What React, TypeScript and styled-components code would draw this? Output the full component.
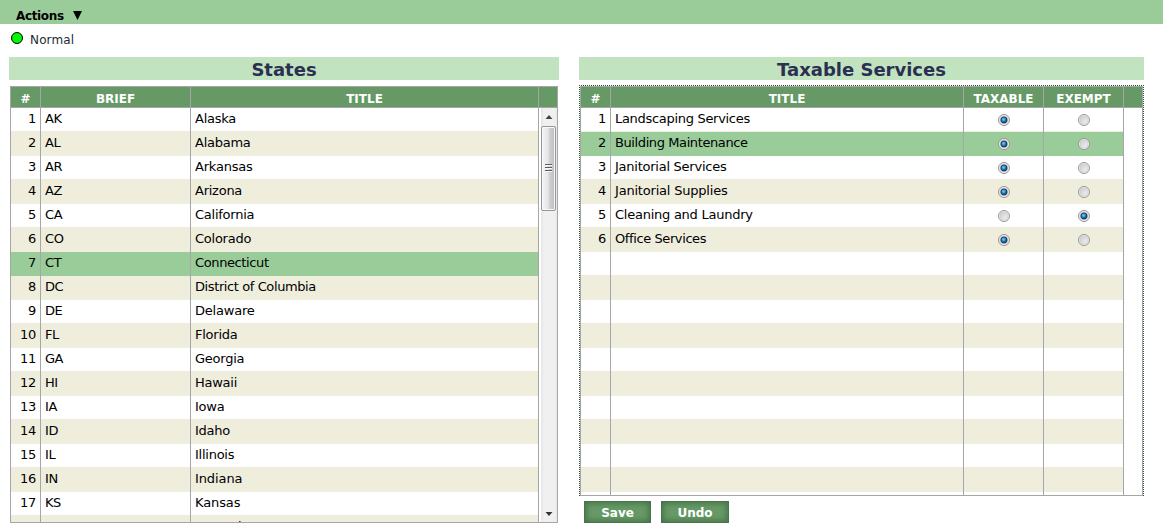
import React, { useState } from "react";
import styled, { createGlobalStyle, css } from "styled-components";

const line = "#a6a6a6";
const header = "#669966";
const leaf = "#99cc99";
const cream = "#efeedd";

const GlobalStyle = createGlobalStyle`
  * { box-sizing: border-box; }
  body {
    margin: 0;
    background: #fff;
    color: #000;
    font: 13px/16px "DejaVu Sans", Verdana, sans-serif;
    overflow: hidden;
  }
`;

const Page = styled.div`
  width: 1163px;
  height: 531px;
  overflow: hidden;
`;

const MenuBar = styled.nav`
  height: 24px;
  padding: 8px 0 0 16px;
  display: flex;
  gap: 9px;
  background: ${leaf};
  font-size: 12px;
  font-weight: bold;
  letter-spacing: -0.35px;
`;

const Caret = styled.svg`
  margin-top: 3px;
`;

const Status = styled.div`
  height: 33px;
  padding: 8px 0 0 11px;
  display: flex;
  gap: 7px;
  color: #1d2b33;
  font-size: 12px;
  line-height: 16px;
  letter-spacing: 0.15px;
`;

const Lamp = styled.span`
  width: 12px;
  height: 12px;
  border: 1px solid #000;
  border-radius: 50%;
  background: #00f800;
`;

const Columns = styled.main`
  display: flex;
  gap: 20px;
  padding-left: 9px;
`;

const Panel = styled.section<{ $width: number }>`
  width: ${(p) => p.$width}px;
`;

const Heading = styled.h2`
  height: 23px;
  margin: 0;
  background: #c2e3c0;
  color: #2b2f51;
  font-size: 18px;
  line-height: 25px;
  text-align: center;
`;

const Grid = styled.div<{ $height: number; $width: number }>`
  width: ${(p) => p.$width}px;
  height: ${(p) => p.$height}px;
  border: 1px solid ${line};
  display: flex;
  flex-direction: column;
`;

const GridSlot = styled.div<{ $focused?: boolean }>`
  padding: 6px 0 0 1px;
  ${(p) =>
    p.$focused &&
    css`
      margin-top: 5px;
      padding: 1px 1px 0;
      background:
        repeating-linear-gradient(90deg, #2d532d 0 1px, #fff 1px 2px) top / 100% 1px no-repeat,
        repeating-linear-gradient(#2d532d 0 1px, #fff 1px 2px) left / 1px 100% no-repeat,
        repeating-linear-gradient(#2d532d 0 1px, #fff 1px 2px) right / 1px 100% no-repeat;
    `}
`;

const Tracks = styled.div<{ $tracks: string }>`
  display: grid;
  grid-template-columns: ${(p) => p.$tracks};
`;

const HeadRow = styled(Tracks)`
  flex: none;
  height: 21px;
  background: ${header};
  border-bottom: 1px solid ${line};
`;

const HeadCell = styled.div`
  height: 20px;
  border-right: 1px solid ${line};
  color: #fff;
  font-size: 12px;
  font-weight: bold;
  line-height: 24px;
  text-align: center;
  &:last-child { border-right: 0; }
`;

const Body = styled.div`
  flex: 1;
  min-height: 0;
  display: flex;
`;

const Rows = styled.div`
  flex: 1;
  overflow: hidden;
`;

const Row = styled(Tracks)<{ $tone: "plain" | "cream" | "leaf" }>`
  height: 24px;
  background: ${(p) => ({ plain: "#fff", cream, leaf })[p.$tone]};
  box-shadow: inset 0 -1px ${(p) => (p.$tone === "leaf" ? leaf : cream)};
`;

const ServiceRow = styled(Row)`
  width: 543px;
`;

const Cell = styled.div<{ $align?: "right" | "center"; $tracking?: number }>`
  padding: ${(p) => (p.$align === "center" ? "6px 0 0" : "3px 4px 0")};
  border-right: 1px solid ${line};
  text-align: ${(p) => p.$align ?? "left"};
  letter-spacing: ${(p) => p.$tracking ?? -0.25}px;
  white-space: nowrap;
`;

const RadioMark = styled.svg`
  display: block;
  margin: 0 auto;
  cursor: pointer;
`;

const ScrollRail = styled.div`
  width: 18px;
  padding-left: 2px;
  display: flex;
  flex-direction: column;
  background: linear-gradient(90deg, #fff 2px, #e5e5e5 2px, #f0f0f0 5px, #f0f0f0 15px, #e9e9e9);
`;

const ScrollArrow = styled.svg<{ $last?: boolean }>`
  flex: none;
  margin-top: ${(p) => (p.$last ? "auto" : "0")};
`;

const Thumb = styled.div`
  flex: none;
  height: 85px;
  width: 15px;
  display: flex;
  align-items: center;
  justify-content: center;
  border: 1px solid #969696;
  border-radius: 2px;
  box-shadow: inset 0 0 0 1px #f8f8f8;
  background: linear-gradient(90deg, #f5f5f5, #e6e6e9 45%, #cfcfd3 60%, #bbbbc1);
`;

const ButtonBar = styled.div`
  display: flex;
  gap: 10px;
  padding: 5px 0 0 5px;
`;

const ActionButton = styled.button<{ $width: number }>`
  width: ${(p) => p.$width}px;
  height: 22px;
  padding: 1px 0 0;
  border: 1px solid #4a754a;
  background: ${header};
  box-shadow: inset 0 0 5px 2px #4b774b;
  color: #fff;
  font: bold 12px/18px "DejaVu Sans", Verdana, sans-serif;
`;

function Radio({ on, onSelect }: { on: boolean; onSelect: () => void }) {
  return (
    <RadioMark width="12" height="12" viewBox="0 0 12 12" onClick={onSelect}>
      <defs>
        <linearGradient id="well" x1="0" y1="0" x2="1" y2="1">
          <stop offset="0" stopColor="#c6c9d0" />
          <stop offset="1" stopColor="#f6f6f6" />
        </linearGradient>
        <radialGradient id="bead" cx="0.42" cy="0.4" r="0.6">
          <stop offset="0" stopColor="#7fd6fa" />
          <stop offset="0.5" stopColor="#1f86c0" />
          <stop offset="1" stopColor="#0d3f66" />
        </radialGradient>
      </defs>
      <circle cx="6" cy="6" r="5.5" fill="#f6f6f6" stroke="#929292" />
      <circle cx="6" cy="6" r="4" fill="url(#well)" stroke="#c3c5c9" strokeWidth="0.6" />
      {on && <circle cx="6" cy="6" r="3.1" fill="url(#bead)" stroke="#15304a" strokeWidth="0.8" />}
    </RadioMark>
  );
}

const states: { brief: string; title: string; tracking?: number }[] = [
  { brief: "AK", title: "Alaska" },
  { brief: "AL", title: "Alabama" },
  { brief: "AR", title: "Arkansas", tracking: -0.2 },
  { brief: "AZ", title: "Arizona" },
  { brief: "CA", title: "California" },
  { brief: "CO", title: "Colorado" },
  { brief: "CT", title: "Connecticut", tracking: -0.38 },
  { brief: "DC", title: "District of Columbia", tracking: -0.4 },
  { brief: "DE", title: "Delaware", tracking: -0.2 },
  { brief: "FL", title: "Florida" },
  { brief: "GA", title: "Georgia" },
  { brief: "HI", title: "Hawaii" },
  { brief: "IA", title: "Iowa" },
  { brief: "ID", title: "Idaho" },
  { brief: "IL", title: "Illinois" },
  { brief: "IN", title: "Indiana", tracking: -0.1 },
  { brief: "KS", title: "Kansas", tracking: -0.1 },
  { brief: "KY", title: "Kentucky" },
];

const services: { title: string; tracking: number }[] = [
  { title: "Landscaping Services", tracking: -0.3 },
  { title: "Building Maintenance", tracking: -0.4 },
  { title: "Janitorial Services", tracking: -0.25 },
  { title: "Janitorial Supplies", tracking: -0.2 },
  { title: "Cleaning and Laundry", tracking: -0.25 },
  { title: "Office Services", tracking: -0.4 },
];

const toneOf = (index: number, selected: number) =>
  index === selected ? "leaf" : index % 2 ? "cream" : "plain";

function StatesGrid() {
  return (
    <GridSlot>
      <Grid $width={548} $height={437}>
        <HeadRow $tracks="30px 150px 348px 1fr">
          <HeadCell>#</HeadCell>
          <HeadCell>BRIEF</HeadCell>
          <HeadCell>TITLE</HeadCell>
          <HeadCell />
        </HeadRow>
        <Body>
          <Rows>
            {states.map(({ brief, title, tracking }, i) => (
              <Row key={brief} $tracks="30px 150px 348px" $tone={toneOf(i, 6)}>
                <Cell $align="right">{i + 1}</Cell>
                <Cell $tracking={-0.45}>{brief}</Cell>
                <Cell $tracking={tracking}>{title}</Cell>
              </Row>
            ))}
          </Rows>
          <ScrollRail>
            <ScrollArrow width="16" height="18" viewBox="0 0 16 18">
              <path d="M4.5 11 8 7l3.5 4z" fill="#444" />
            </ScrollArrow>
            <Thumb>
              <svg width="7" height="9" viewBox="0 0 7 9">
                <path d="M0 .5h7M0 3.5h7M0 6.5h7" stroke="#5d5d5d" />
                <path d="M0 1.5h7M0 4.5h7M0 7.5h7" stroke="#f7f7f7" />
              </svg>
            </Thumb>
            <ScrollArrow $last width="16" height="16" viewBox="0 0 16 16">
              <path d="M4.5 6h7L8 10z" fill="#333" />
            </ScrollArrow>
          </ScrollRail>
        </Body>
      </Grid>
    </GridSlot>
  );
}

function ServicesGrid() {
  const [taxable, setTaxable] = useState([true, true, true, true, false, true]);
  const choose = (index: number, value: boolean) =>
    setTaxable(taxable.map((current, i) => (i === index ? value : current)));
  const tracks = "30px 353px 80px 80px";

  return (
    <GridSlot $focused>
      <Grid $width={563} $height={410}>
        <HeadRow $tracks={`${tracks} 1fr`}>
          <HeadCell>#</HeadCell>
          <HeadCell>TITLE</HeadCell>
          <HeadCell>TAXABLE</HeadCell>
          <HeadCell>EXEMPT</HeadCell>
          <HeadCell />
        </HeadRow>
        <Body>
          <Rows>
            {Array.from({ length: 17 }, (_, i) => {
              const service = services[i];
              return (
                <ServiceRow key={i} $tracks={tracks} $tone={toneOf(i, 1)}>
                  <Cell $align="right">{service && i + 1}</Cell>
                  <Cell $tracking={service?.tracking}>{service?.title}</Cell>
                  <Cell $align="center">
                    {service && <Radio on={taxable[i]} onSelect={() => choose(i, true)} />}
                  </Cell>
                  <Cell $align="center">
                    {service && <Radio on={!taxable[i]} onSelect={() => choose(i, false)} />}
                  </Cell>
                </ServiceRow>
              );
            })}
          </Rows>
        </Body>
      </Grid>
    </GridSlot>
  );
}

export default function App() {
  return (
    <Page>
      <GlobalStyle />
      <MenuBar>
        <span>Actions</span>
        <Caret width="9" height="9" viewBox="0 0 9 9">
          <path d="M0 0h9L4.5 9z" />
        </Caret>
      </MenuBar>
      <Status>
        <Lamp />
        <span>Normal</span>
      </Status>
      <Columns>
        <Panel $width={550}>
          <Heading>States</Heading>
          <StatesGrid />
        </Panel>
        <Panel $width={565}>
          <Heading>Taxable Services</Heading>
          <ServicesGrid />
          <ButtonBar>
            <ActionButton $width={67}>Save</ActionButton>
            <ActionButton $width={68}>Undo</ActionButton>
          </ButtonBar>
        </Panel>
      </Columns>
    </Page>
  );
}
